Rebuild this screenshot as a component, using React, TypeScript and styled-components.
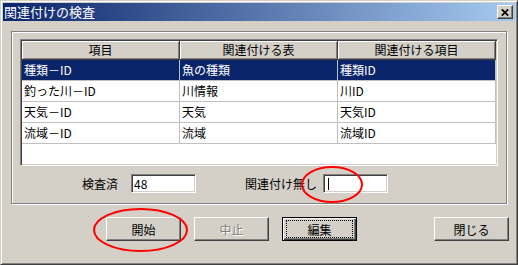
import React from "react"
import styled, { createGlobalStyle } from "styled-components"

const face = "#d4d0c8"
const uiFont = `"Noto Sans CJK JP", "Noto Sans", sans-serif`

const GlobalStyle = createGlobalStyle`
	body {
		margin: 0;
		background: ${face};
	}
`

const Window = styled.div`
	position: relative;
	box-sizing: border-box;
	width: 518px;
	height: 265px;
	display: flex;
	flex-direction: column;
	padding: 2px;
	background: ${face};
	border: 1px solid;
	border-color: ${face} #404040 #404040 ${face};
	box-shadow: inset 1px 1px #fff, inset -1px -1px #808080;
	font-family: ${uiFont};
	font-size: 12px;
	color: #000;
`

const TitleBar = styled.div`
	height: 18px;
	display: flex;
	align-items: center;
	padding: 0 2px 0 1px;
	background: linear-gradient(to right, #0a246a, #a6caf0);
`

const Title = styled.div`
	flex: 1;
	color: #fff;
	font-size: 13px;
	line-height: 18px;
	white-space: nowrap;
`

const CloseButton = styled.div`
	box-sizing: border-box;
	width: 16px;
	height: 14px;
	display: flex;
	align-items: center;
	justify-content: center;
	background: ${face};
	border: 1px solid;
	border-color: #fff #404040 #404040 #fff;
	box-shadow: inset -1px -1px #808080;
`

const Group = styled.div`
	margin: 10px 8px 0;
	padding: 7px 8px 10px;
	display: flex;
	flex-direction: column;
	border: 1px solid #808080;
	box-shadow: inset 1px 1px #fff, 1px 1px #fff;
`

const Grid = styled.div`
	box-sizing: border-box;
	height: 127px;
	padding: 1px;
	background: #fff;
	border: 1px solid;
	border-color: #808080 #fff #fff #808080;
	box-shadow: inset 1px 1px #404040, inset -1px -1px ${face};
`

const Row = styled.div<{ $head?: boolean; $selected?: boolean }>`
	display: grid;
	grid-template-columns: 158px 158px 158px;
	height: ${p => (p.$head ? 19 : 21)}px;
	background: ${p => (p.$head ? face : p.$selected ? "#0a246a" : "#fff")};
	color: ${p => (p.$selected ? "#fff" : "#000")};
`

const HeadCell = styled.div`
	box-sizing: border-box;
	border-right: 1px solid #404040;
	border-bottom: 1px solid #404040;
	box-shadow: inset 1px 1px #fff, inset -1px -1px #808080;
	text-align: center;
	line-height: 18px;
	white-space: nowrap;
`

const Cell = styled.div`
	box-sizing: border-box;
	border-right: 1px solid #c0c0c0;
	border-bottom: 1px solid #c0c0c0;
	padding-left: 2px;
	line-height: 20px;
	white-space: nowrap;
	overflow: hidden;
`

const FieldRow = styled.div`
	display: flex;
	align-items: center;
	margin-top: 8px;
`

const Label = styled.div<{ $width: number }>`
	width: ${p => p.$width}px;
	text-align: right;
	white-space: nowrap;
`

const TextBox = styled.div<{ $gap: number }>`
	box-sizing: border-box;
	width: 65px;
	height: 19px;
	margin-left: ${p => p.$gap}px;
	padding: 0 2px;
	display: flex;
	align-items: center;
	background: #fff;
	border: 1px solid;
	border-color: #808080 #fff #fff #808080;
	box-shadow: inset 1px 1px #404040, inset -1px -1px ${face};
	line-height: 16px;
`

const Caret = styled.span`
	width: 1px;
	height: 12px;
	margin-left: 2px;
	background: #000;
`

const ButtonRow = styled.div`
	display: flex;
	gap: 13px;
	margin-top: 13px;
	padding: 0 6px 0 103px;
`

const Button = styled.div<{ $default?: boolean; $disabled?: boolean; $right?: boolean }>`
	position: relative;
	box-sizing: border-box;
	width: 75px;
	height: 24px;
	margin-left: ${p => (p.$right ? "auto" : "0")};
	display: flex;
	align-items: center;
	justify-content: center;
	background: ${face};
	border: 1px solid;
	border-color: ${p => (p.$default ? "#000" : "#fff #404040 #404040 #fff")};
	box-shadow: ${p =>
		p.$default ? "inset 1px 1px #fff, inset -1px -1px #404040, inset -2px -2px #808080" : "inset -1px -1px #808080"};
	color: ${p => (p.$disabled ? "#808080" : "#000")};
	text-shadow: ${p => (p.$disabled ? "1px 1px #fff" : "none")};
	font-size: 12px;

	${p =>
		p.$default &&
		`
		&::after {
			content: "";
			position: absolute;
			inset: 2px 3px 2px 3px;
			border: 1px dotted #000;
		}
	`}
`

const Marks = styled.svg`
	position: absolute;
	left: -1px;
	top: -1px;
	pointer-events: none;
`

const rows = [
	["種類－ID", "魚の種類", "種類ID"],
	["釣った川－ID", "川情報", "川ID"],
	["天気－ID", "天気", "天気ID"],
	["流域－ID", "流域", "流域ID"],
]

export default function App() {
	return (
		<>
			<GlobalStyle />
			<Window>
				<TitleBar>
					<Title>関連付けの検査</Title>
					<CloseButton>
						<svg width="8" height="7" viewBox="0 0 8 7">
							<path d="M0.8 0.3 L7.2 6.7 M7.2 0.3 L0.8 6.7" stroke="#000" strokeWidth="1.7" />
						</svg>
					</CloseButton>
				</TitleBar>

				<Group>
					<Grid>
						<Row $head>
							<HeadCell>項目</HeadCell>
							<HeadCell>関連付ける表</HeadCell>
							<HeadCell>関連付ける項目</HeadCell>
						</Row>
						{rows.map((r, i) => (
							<Row key={i} $selected={i === 0}>
								{r.map((c, j) => (
									<Cell key={j}>{c}</Cell>
								))}
							</Row>
						))}
					</Grid>

					<FieldRow>
						<Label $width={98}>検査済</Label>
						<TextBox $gap={13}>48</TextBox>
						<Label $width={121}>関連付け無し</Label>
						<TextBox $gap={6}>
							<Caret />
						</TextBox>
					</FieldRow>
				</Group>

				<ButtonRow>
					<Button>開始</Button>
					<Button $disabled>中止</Button>
					<Button $default>編集</Button>
					<Button $right>閉じる</Button>
				</ButtonRow>

				<Marks width="518" height="265" viewBox="0 0 518 265">
					<ellipse cx="140.5" cy="230" rx="46.5" ry="21" fill="none" stroke="#ff0000" strokeWidth="2" />
					<ellipse cx="332" cy="184.5" rx="30" ry="17.5" fill="none" stroke="#ff0000" strokeWidth="2" />
				</Marks>
			</Window>
		</>
	)
}
